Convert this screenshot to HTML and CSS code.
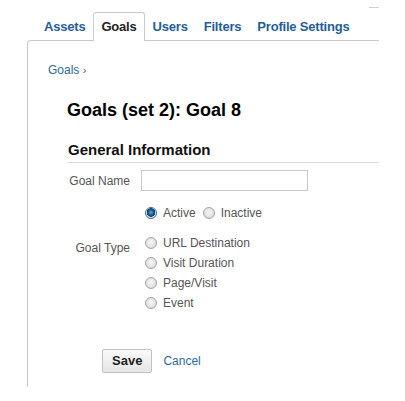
FILE: index.html
```html
<!DOCTYPE html>
<html>
<head>
<meta charset="utf-8">
<link rel="stylesheet" href="styles.css">
</head>
<body>
<div class="wrap">
  <div class="frame-top"></div>
  <ul class="tabs">
    <li class="tab"><a href="#">Assets</a></li>
    <li class="tab active"><a href="#">Goals</a></li>
    <li class="tab"><a href="#">Users</a></li>
    <li class="tab"><a href="#">Filters</a></li>
    <li class="tab"><a href="#">Profile Settings</a></li>
  </ul>
  <div class="panel">
    <div class="crumb"><a href="#">Goals</a> <span class="sep">›</span></div>
    <div class="form">
      <h1>Goals (set 2): Goal 8</h1>
      <h2>General Information</h2>
      <div class="field name-row">
        <div class="field-label">Goal Name</div>
        <div class="text-input"></div>
      </div>
      <div class="field status-row">
        <div class="field-label"></div>
        <div class="inline-options">
          <label class="opt"><span class="radio checked"></span>Active</label>
          <label class="opt"><span class="radio"></span>Inactive</label>
        </div>
      </div>
      <div class="field type-row">
        <div class="field-label type-label">Goal Type</div>
        <div class="stack-options">
          <label class="opt"><span class="radio"></span>URL Destination</label>
          <label class="opt"><span class="radio"></span>Visit Duration</label>
          <label class="opt"><span class="radio"></span>Page/Visit</label>
          <label class="opt"><span class="radio"></span>Event</label>
        </div>
      </div>
      <div class="actions">
        <button class="btn">Save</button>
        <a href="#" class="cancel">Cancel</a>
      </div>
    </div>
  </div>
</div>
</body>
</html>
```
FILE: styles.css
```css
* { box-sizing: border-box; }
body {
  margin: 0;
  font-family: "Liberation Sans", Arial, sans-serif;
  background: #fff;
  color: #222;
}
a { text-decoration: none; }
.wrap {
  margin-left: 27px;
  width: 352px;
}
.frame-top {
  margin-top: 7px;
  margin-left: auto;
  width: 10px;
  height: 1px;
  background: #cfcfcf;
}
.tabs {
  list-style: none;
  margin: 4px 0 0 0;
  padding: 0 0 0 9px;
  display: flex;
}
.tab {
  position: relative;
  border: 1px solid transparent;
  border-bottom: none;
  padding: 6px 7px 5px;
  margin-bottom: -1px;
  height: 29px;
  font-size: 13px;
  font-weight: bold;
  line-height: 16px;
  letter-spacing: -0.2px;
}
.tab a { color: #1f5e9b; }
.tab.active {
  background: #fff;
  border-color: #cbcbcb;
  border-radius: 3px 3px 0 0;
}
.tab.active a { color: #222; }
.panel {
  border-top: 1px solid #c8c8c8;
  border-left: 1px solid #c8c8c8;
  border-top-left-radius: 4px;
  padding-top: 21px;
  padding-bottom: 14px;
}
.crumb {
  padding-left: 20px;
  font-size: 12px;
  line-height: 16px;
}
.crumb a { color: #2d6a9f; }
.crumb .sep { color: #555; font-size: 11px; }
.form { padding-left: 39px; }
h1 {
  margin: 21px 0 0 0;
  font-size: 18px;
  line-height: 22px;
  font-weight: bold;
  color: #000;
}
h2 {
  margin: 20px 0 0 0;
  padding: 0 0 3px 1px;
  font-size: 15px;
  line-height: 18px;
  font-weight: bold;
  color: #111;
  border-bottom: 1px solid #dcdcdc;
}
.field {
  display: flex;
  font-size: 12px;
  color: #555;
}
.field-label {
  width: 63px;
  margin-right: 11px;
  text-align: right;
  flex: none;
}
.name-row { margin-top: 7px; }
.name-row .field-label { line-height: 21px; padding-top: 1px; }
.text-input {
  width: 167px;
  height: 21px;
  border: 1px solid #c9c9c9;
  background: #fff;
}
.status-row { margin-top: 11px; }
.type-row { margin-top: 10px; }
.type-label { padding-top: 5px; line-height: 20px; }
.inline-options { display: flex; gap: 3px; }
.stack-options { display: flex; flex-direction: column; }
.opt {
  display: flex;
  align-items: center;
  height: 20px;
  line-height: 20px;
  color: #555;
}
.radio {
  width: 12px;
  height: 12px;
  margin: 0 6px 0 4px;
  border-radius: 50%;
  border: 1px solid #a3a3a3;
  background: radial-gradient(circle at 50% 45%, #f6f6f6 0, #e4e4e4 55%, #d0d0d0 100%);
  flex: none;
}
.radio.checked {
  border-color: #3a6a94;
  background: radial-gradient(circle at 50% 45%, #5fa6da 0, #1d5f98 2.5px, #143f66 4px, #dfe8f0 4.5px, #cfd6de 100%);
}
.actions {
  margin-top: 36px;
  padding-left: 35px;
  display: flex;
  align-items: center;
}
.btn {
  height: 24px;
  padding: 0 9px;
  border: 1px solid #c2c2c2;
  border-radius: 2px;
  background: linear-gradient(#f9f9f9, #e6e6e6);
  font-family: "Liberation Sans", Arial, sans-serif;
  font-size: 13px;
  font-weight: bold;
  color: #222;
  line-height: 20px;
}
.cancel {
  margin-left: 11px;
  font-size: 12px;
  color: #2d6a9f;
}
```
